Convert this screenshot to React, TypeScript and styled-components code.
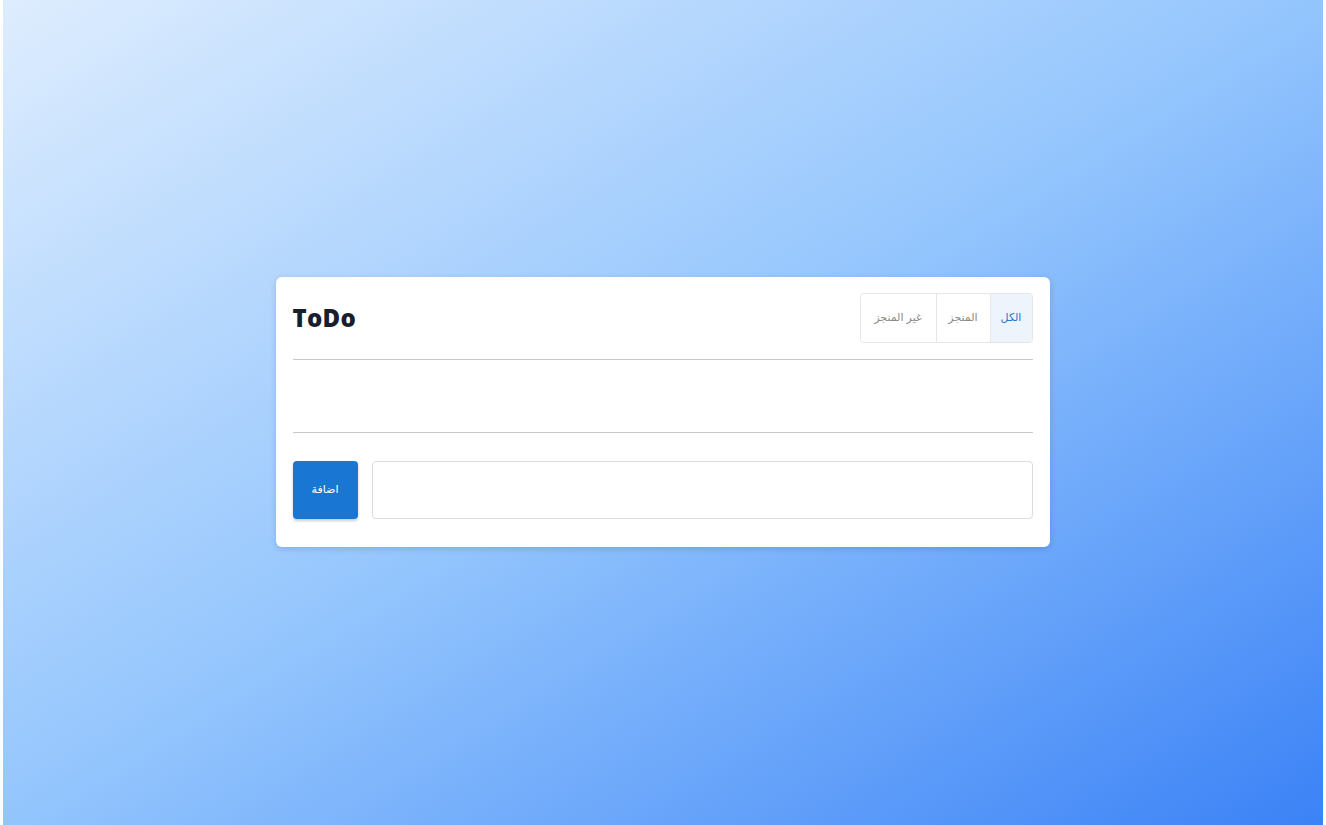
import React, { useState } from "react";
import styled, { createGlobalStyle } from "styled-components";

const Global = createGlobalStyle`
  html, body { margin: 0; padding: 0; background: #ffffff; }
  body { font-family: "Liberation Sans", "DejaVu Sans", Arial, sans-serif; }
  * { box-sizing: border-box; }
`;

const Page = styled.div`
  margin: 0 3px;
  height: 825px;
  padding-bottom: 2px;
  background: linear-gradient(to bottom right, #deedfe 0%, #93c5fd 50%, #3b82f6 100%);
  display: flex;
  align-items: center;
  justify-content: center;
`;

const Card = styled.div`
  width: 774px;
  margin-right: 1px;
  background: #ffffff;
  border-radius: 6px;
  box-shadow: 0 2px 6px rgba(30, 60, 120, 0.18);
  padding: 16px 17px 28px 17px;
  display: flex;
  flex-direction: column;
`;

const Header = styled.div`
  display: flex;
  align-items: center;
  justify-content: space-between;
  height: 50px;
  margin-bottom: 16px;
`;

const Title = styled.h1`
  margin: 0;
  font-family: "Open Sans", "Noto Sans", sans-serif;
  font-weight: 800;
  font-size: 24px;
  color: #1a1d2e;
  letter-spacing: 0.3px;
`;

const Toggle = styled.div`
  display: flex;
  direction: rtl;
  height: 50px;
  border: 1px solid #e3e6ea;
  border-radius: 4px;
  overflow: hidden;
`;

const ToggleBtn = styled.button<{ $active?: boolean; $w: number }>`
  width: ${(p) => p.$w}px;
  border: none;
  border-left: 1px solid #e3e6ea;
  &:last-child { border-left: none; }
  background: ${(p) => (p.$active ? "#eef4fb" : "#ffffff")};
  color: ${(p) => (p.$active ? "#1976d2" : "#8a8a8a")};
  font-family: "Liberation Sans", "DejaVu Sans", sans-serif;
  font-size: 11px;
  padding: 0;
  cursor: pointer;
`;

const Divider = styled.hr`
  margin: 0;
  border: none;
  border-top: 1px solid #c9c9c9;
`;

const List = styled.div`
  height: 72px;
`;

const InputRow = styled.div`
  display: flex;
  gap: 14px;
  margin-top: 28px;
  height: 58px;
`;

const AddButton = styled.button`
  width: 65px;
  border: none;
  border-radius: 4px;
  background: #1976d2;
  color: #ffffff;
  font-family: "Liberation Sans", "DejaVu Sans", sans-serif;
  font-size: 11px;
  font-weight: 400;
  box-shadow: 0 2px 3px rgba(0, 0, 0, 0.2);
  cursor: pointer;
`;

const TextInput = styled.input`
  flex: 1;
  border: 1px solid #dcdcdc;
  border-radius: 4px;
  font-size: 14px;
  padding: 0 12px;
  outline: none;
  direction: rtl;
`;

export default function App() {
  const [filter, setFilter] = useState("all");
  const [value, setValue] = useState("");
  return (
    <>
      <Global />
      <Page>
        <Card>
          <Header>
            <Title>ToDo</Title>
            <Toggle>
              <ToggleBtn $w={42} $active={filter === "all"} onClick={() => setFilter("all")}>الكل</ToggleBtn>
              <ToggleBtn $w={54} $active={filter === "done"} onClick={() => setFilter("done")}>المنجز</ToggleBtn>
              <ToggleBtn $w={75} $active={filter === "undone"} onClick={() => setFilter("undone")}>غير المنجز</ToggleBtn>
            </Toggle>
          </Header>
          <Divider />
          <List />
          <Divider />
          <InputRow>
            <AddButton>اضافة</AddButton>
            <TextInput value={value} onChange={(e) => setValue(e.target.value)} />
          </InputRow>
        </Card>
      </Page>
    </>
  );
}
